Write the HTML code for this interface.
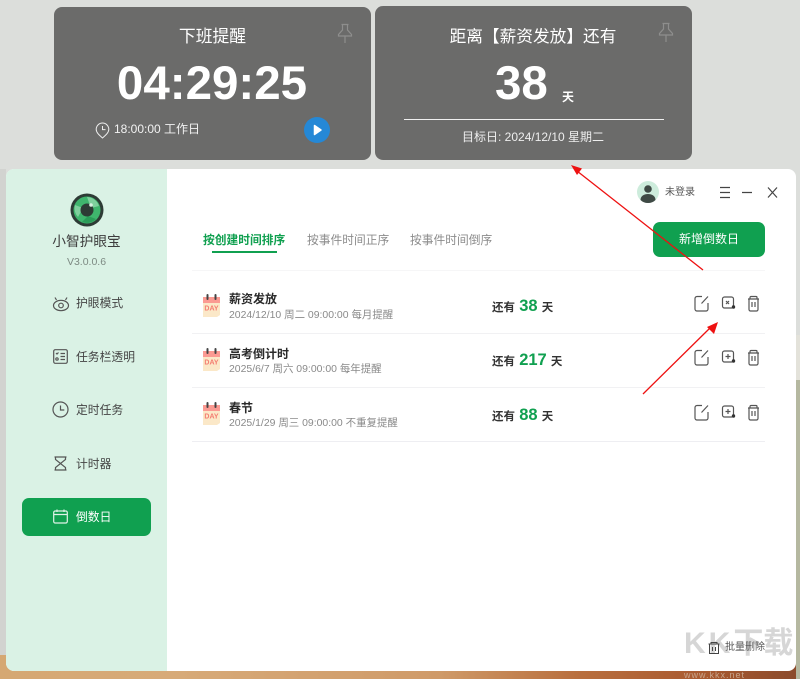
<!DOCTYPE html>
<html lang="zh-CN">
<head>
<meta charset="utf-8">
<title>小智护眼宝</title>
<style>
*{box-sizing:border-box;margin:0;padding:0}
html,body{width:800px;height:679px;overflow:hidden}
body{position:relative;background:#dcdedb;font-family:"Liberation Sans","Noto Sans CJK SC",sans-serif;color:#333}
.a{position:absolute;white-space:nowrap}
.card{position:absolute;background:#6b6b6a;border-radius:8px;color:#fff}
.c{text-align:center}
#win{position:absolute;left:6px;top:169px;width:790px;height:502px;background:#fff;border-radius:8px;overflow:hidden}
#side{position:absolute;left:0;top:0;width:161px;height:502px;background:#daf2e5}
.nav{position:absolute;left:76px;font-size:11.8px;color:#444;line-height:16px;white-space:nowrap}
.ico{position:absolute;fill:none;stroke:#555;stroke-width:1.2}
.title{position:absolute;left:229px;font-size:12px;font-weight:700;color:#2a2a2a;line-height:16px}
.sub{position:absolute;left:229px;font-size:10.45px;color:#8a8a8a;line-height:14px;white-space:nowrap}
.rem{position:absolute;left:492px;font-size:11.5px;font-weight:700;color:#333;line-height:20px;white-space:nowrap}
.rem b{font-size:16.5px;color:#10a050;margin:0 1px}
.line{position:absolute;left:192px;width:573px;height:1px;background:#f1f1f3}
.tab{position:absolute;top:233px;font-size:11.75px;line-height:16px;color:#8c8c8c;white-space:nowrap}
</style>
</head>
<body>
<!-- backdrop pieces -->
<div class="a" style="left:0;top:655px;width:800px;height:24px;background:linear-gradient(90deg,#d5a873 0,#d7aa78 22%,#cf9a68 55%,#b96f3e 72%,#a95a30 88%,#8a4a2b 100%)"></div>
<div class="a" style="left:796px;top:380px;width:4px;height:299px;background:#b5b8a0"></div>
<div class="a" style="left:796px;top:335px;width:4px;height:45px;background:#e3e2da"></div>
<div class="a" style="left:0;top:169px;width:6px;height:486px;background:#d2d3d0"></div>

<!-- card 1 -->
<div class="card" style="left:54px;top:7px;width:317px;height:153px"></div>
<div class="a c" style="left:54px;top:26px;width:317px;font-size:16.8px;line-height:22px;color:#fff">下班提醒</div>
<div class="a c" style="left:54px;top:56px;width:317px;font-size:47.5px;font-weight:700;line-height:56px;color:#fff;padding-right:1px">04:29:25</div>
<svg class="a" style="left:95px;top:122px" width="15" height="17" viewBox="0 0 15 17" fill="none" stroke="#eee" stroke-width="1"><path d="M7.500 16C4 13 1.200 10.500 1.200 7.300a6.300 6.300 0 0 1 12.600 0C13.800 10.500 11 13 7.500 16Z"/><path d="M7.500 4v3.600h3"/></svg>
<div class="a" style="left:114px;top:121px;font-size:12px;line-height:17px;color:#f2f2f2">18:00:00 工作日</div>
<div class="a" style="left:304px;top:117px;width:26px;height:26px;border-radius:50%;background:#2588d6"></div>
<svg class="a" style="left:304px;top:117px" width="26" height="26"><path d="M10.500 8.500v9l6.500-4.500z" fill="#fff" stroke="#fff" stroke-width="1.500" stroke-linejoin="round"/></svg>
<svg class="a" style="left:337px;top:23px" width="16" height="21" viewBox="0 0 16 21" fill="none" stroke="#8e8e8d" stroke-width="1.200"><path d="M4.500 1.500h7M5.500 1.500v5.500L1.500 11.500v1.500h13v-1.500L10.500 7V1.500M8 13v7"/></svg>

<!-- card 2 -->
<div class="card" style="left:375px;top:6px;width:317px;height:154px"></div>
<div class="a c" style="left:375px;top:26px;width:317px;font-size:16.7px;line-height:22px;color:#fff;padding-right:1px">距离【薪资发放】还有</div>
<div class="a" style="left:495px;top:56px;font-size:47.5px;font-weight:700;line-height:56px;color:#fff">38</div>
<div class="a" style="left:562px;top:89px;font-size:12px;font-weight:700;line-height:16px;color:#fff">天</div>
<div class="a" style="left:404px;top:119px;width:260px;height:1px;background:#f0f0f0"></div>
<div class="a" style="left:462px;top:129px;font-size:12px;line-height:17px;color:#eee">目标日: 2024/12/10 星期二</div>
<svg class="a" style="left:658px;top:22px" width="16" height="21" viewBox="0 0 16 21" fill="none" stroke="#8e8e8d" stroke-width="1.200"><path d="M4.500 1.500h7M5.500 1.500v5.500L1.500 11.500v1.500h13v-1.500L10.500 7V1.500M8 13v7"/></svg>

<!-- window -->
<div id="win"><div id="side"></div></div>

<!-- sidebar -->
<svg class="a" style="left:70px;top:193px" width="34" height="34" viewBox="0 0 34 34">
<circle cx="17" cy="17" r="16.500" fill="#2d3b35"/>
<circle cx="17" cy="17" r="13.500" fill="#3fb56d"/>
<path d="M17 4a13 13 0 0 1 12 9l-8 2zM5 12l8 3-5 9a13 13 0 0 1-3-12z" fill="#7fd09d"/>
<path d="M26 26a13 13 0 0 1-14 3l6-6z" fill="#2a9c58"/>
<circle cx="17" cy="17" r="6.500" fill="#2d3b35"/>
<circle cx="21" cy="12" r="1.800" fill="#d8f0e0"/>
</svg>
<div class="a c" style="left:6px;top:232px;width:161px;font-size:13.7px;line-height:20px;color:#3d3d3d">小智护眼宝</div>
<div class="a c" style="left:6px;top:255px;width:161px;font-size:10.5px;line-height:14px;color:#7d8a83">V3.0.0.6</div>

<svg class="ico" style="left:52px;top:296px" width="18" height="16" viewBox="0 0 18 16"><ellipse cx="9" cy="9.500" rx="7.500" ry="5.200"/><circle cx="9" cy="9.500" r="2.300"/><path d="M3 1.500l1.500 2.500M15 1.500l-1.500 2.500"/></svg>
<div class="nav" style="top:295px">护眼模式</div>
<svg class="ico" style="left:53px;top:349px" width="15" height="15" viewBox="0 0 15 15"><rect x=".7" y=".7" width="13.600" height="13.600" rx="1.500"/><path d="M7.500 4.500h4.500M7.500 7.500h4.500M7.500 10.500h4.500M3 4l1 1 1.500-1.500"/><circle cx="4" cy="10" r="1.200"/></svg>
<div class="nav" style="top:349px">任务栏透明</div>
<svg class="ico" style="left:52px;top:401px" width="17" height="17" viewBox="0 0 17 17"><circle cx="8.500" cy="8.500" r="7.500"/><path d="M8.500 4.500v4.500h3.800"/></svg>
<div class="nav" style="top:402px">定时任务</div>
<svg class="ico" style="left:53px;top:456px" width="15" height="15" viewBox="0 0 15 15"><path d="M1.500 1h12M1.500 14h12M2.500 1v2.500L7.500 7.500l5-4V1M2.500 14v-2.500L7.500 7.500l5 4V14"/></svg>
<div class="nav" style="top:456px">计时器</div>
<div class="a" style="left:22px;top:498px;width:129px;height:38px;border-radius:7px;background:#10a050"></div>
<svg class="ico" style="left:53px;top:509px;stroke:#dff3e8" width="15" height="15" viewBox="0 0 15 15"><rect x=".7" y="2" width="13.600" height="12" rx="1.500"/><path d="M.7 5.500h13.600M4 .5v2.500M11 .5v2.500"/></svg>
<div class="nav" style="top:509px;color:#fff">倒数日</div>

<!-- top bar -->
<svg class="a" style="left:637px;top:181px" width="22" height="22" viewBox="0 0 22 22"><circle cx="11" cy="11" r="11" fill="#cdecdc"/><circle cx="11" cy="8" r="3.800" fill="#3f4a45"/><path d="M3.500 19c0-4 3.500-6 7.500-6s7.500 2 7.500 6c-2 2-4.500 3-7.500 3s-5.500-1-7.500-3z" fill="#3f4a45"/></svg>
<div class="a" style="left:665px;top:185px;font-size:10px;line-height:16px;color:#555">未登录</div>
<svg class="a" style="left:720px;top:186px" width="60" height="13" viewBox="0 0 60 13" fill="none" stroke="#444" stroke-width="1.200"><path d="M0 1.500h10M0 6.500h10M0 11.500h10M22 6.500h10M48 1.500l9 10M57 1.500l-9 10"/></svg>

<!-- tabs -->
<div class="tab" style="left:203px;color:#10a050;font-weight:700">按创建时间排序</div>
<div class="a" style="left:212px;top:251px;width:65px;height:2px;background:#10a050"></div>
<div class="tab" style="left:307px">按事件时间正序</div>
<div class="tab" style="left:410px">按事件时间倒序</div>
<div class="a c" style="left:653px;top:222px;width:112px;height:35px;border-radius:7px;background:#10a050;color:#fff;font-size:12px;line-height:35px">新增倒数日</div>

<div class="line" style="top:270px;background:#f6f6f7"></div>
<div class="line" style="top:333px"></div>
<div class="line" style="top:387px"></div>
<div class="line" style="top:441px;background:#eeeef2"></div>

<!-- rows -->
<svg class="a" style="left:202px;top:293px" width="19" height="25" viewBox="0 0 19 25"><path d="M1 4h17v18l-3 2H1z" fill="#fbe8c8"/><rect x="1" y="4" width="17" height="6" fill="#fb9a92"/><rect x="4.500" y="1" width="2" height="6" rx="1" fill="#444"/><rect x="12.500" y="1" width="2" height="6" rx="1" fill="#444"/><text x="9.500" y="17.500" text-anchor="middle" font-size="7" font-weight="700" fill="#f47c70" font-family="Liberation Sans,sans-serif">DAY</text></svg>
<div class="title" style="top:291px">薪资发放</div>
<div class="sub" style="top:309px">2024/12/10 周二 09:00:00 每月提醒</div>
<div class="rem" style="top:296px">还有 <b>38</b> 天</div>

<svg class="a" style="left:202px;top:347px" width="19" height="25" viewBox="0 0 19 25"><path d="M1 4h17v18l-3 2H1z" fill="#fbe8c8"/><rect x="1" y="4" width="17" height="6" fill="#fb9a92"/><rect x="4.500" y="1" width="2" height="6" rx="1" fill="#444"/><rect x="12.500" y="1" width="2" height="6" rx="1" fill="#444"/><text x="9.500" y="17.500" text-anchor="middle" font-size="7" font-weight="700" fill="#f47c70" font-family="Liberation Sans,sans-serif">DAY</text></svg>
<div class="title" style="top:346px">高考倒计时</div>
<div class="sub" style="top:363px">2025/6/7 周六 09:00:00 每年提醒</div>
<div class="rem" style="top:350px">还有 <b>217</b> 天</div>

<svg class="a" style="left:202px;top:401px" width="19" height="25" viewBox="0 0 19 25"><path d="M1 4h17v18l-3 2H1z" fill="#fbe8c8"/><rect x="1" y="4" width="17" height="6" fill="#fb9a92"/><rect x="4.500" y="1" width="2" height="6" rx="1" fill="#444"/><rect x="12.500" y="1" width="2" height="6" rx="1" fill="#444"/><text x="9.500" y="17.500" text-anchor="middle" font-size="7" font-weight="700" fill="#f47c70" font-family="Liberation Sans,sans-serif">DAY</text></svg>
<div class="title" style="top:400px">春节</div>
<div class="sub" style="top:417px">2025/1/29 周三 09:00:00 不重复提醒</div>
<div class="rem" style="top:405px">还有 <b>88</b> 天</div>

<!-- row actions -->
<svg class="a" style="left:694px;top:294px" width="70" height="18" viewBox="0 0 70 18" fill="none" stroke="#555" stroke-width="1.200"><path d="M8 2.500H3a2 2 0 0 0-2 2V15a2 2 0 0 0 2 2h9a2 2 0 0 0 2-2V9M7.500 9.500L14 2.500"/><rect x="28.500" y="3" width="11" height="11" rx="2"/><path d="M32 7l3 3M35 7l-3 3"/><circle cx="39.500" cy="13" r="1.700" fill="#333" stroke="none"/><path d="M54 5h11M56 5V3.500a1 1 0 0 1 1-1h5a1 1 0 0 1 1 1V5M55 5v10.500a1.500 1.500 0 0 0 1.500 1.500h6a1.500 1.500 0 0 0 1.500-1.500V5M58 8v5M61 8v5"/></svg>
<svg class="a" style="left:694px;top:348px" width="70" height="18" viewBox="0 0 70 18" fill="none" stroke="#555" stroke-width="1.200"><path d="M8 2.500H3a2 2 0 0 0-2 2V15a2 2 0 0 0 2 2h9a2 2 0 0 0 2-2V9M7.500 9.500L14 2.500"/><rect x="28.500" y="3" width="11" height="11" rx="2"/><path d="M34 6v5M31.500 8.500h5"/><circle cx="39.500" cy="13" r="1.700" fill="#333" stroke="none"/><path d="M54 5h11M56 5V3.500a1 1 0 0 1 1-1h5a1 1 0 0 1 1 1V5M55 5v10.500a1.500 1.500 0 0 0 1.500 1.500h6a1.500 1.500 0 0 0 1.500-1.500V5M58 8v5M61 8v5"/></svg>
<svg class="a" style="left:694px;top:403px" width="70" height="18" viewBox="0 0 70 18" fill="none" stroke="#555" stroke-width="1.200"><path d="M8 2.500H3a2 2 0 0 0-2 2V15a2 2 0 0 0 2 2h9a2 2 0 0 0 2-2V9M7.500 9.500L14 2.500"/><rect x="28.500" y="3" width="11" height="11" rx="2"/><path d="M34 6v5M31.500 8.500h5"/><circle cx="39.500" cy="13" r="1.700" fill="#333" stroke="none"/><path d="M54 5h11M56 5V3.500a1 1 0 0 1 1-1h5a1 1 0 0 1 1 1V5M55 5v10.500a1.500 1.500 0 0 0 1.500 1.500h6a1.500 1.500 0 0 0 1.500-1.500V5M58 8v5M61 8v5"/></svg>

<!-- watermark & bulk delete -->
<div class="a" style="left:684px;top:624px;font-size:30px;font-weight:700;line-height:40px;color:#d6d6d6"><span style="letter-spacing:3px">KK</span>下载</div>
<svg class="a" style="left:708px;top:641px" width="12" height="14" viewBox="0 0 12 14" fill="none" stroke="#444" stroke-width="1"><path d="M.500 3h11M3 3V1.500h6V3M1.500 3v9.500h9V3M4.500 6v4M7.500 6v4"/></svg>
<div class="a" style="left:725px;top:640px;font-size:10px;line-height:15px;color:#555">批量删除</div>
<div class="a" style="left:684px;top:671px;font-size:9px;line-height:8px;color:#c9a58c;letter-spacing:1px;overflow:hidden;height:8px">www.kkx.net</div>

<!-- arrows -->
<svg class="a" style="left:0;top:0" width="800" height="679" fill="none">
<path d="M703 270L577 171" stroke="#ee1111" stroke-width="1.300"/>
<path d="M571 165l11 3.500-5 6.500z" fill="#ee1111"/>
<path d="M643 394L711 327" stroke="#ee1111" stroke-width="1.300"/>
<path d="M718 322l-4 12-7-7z" fill="#ee1111"/>
</svg>
</body>
</html>
